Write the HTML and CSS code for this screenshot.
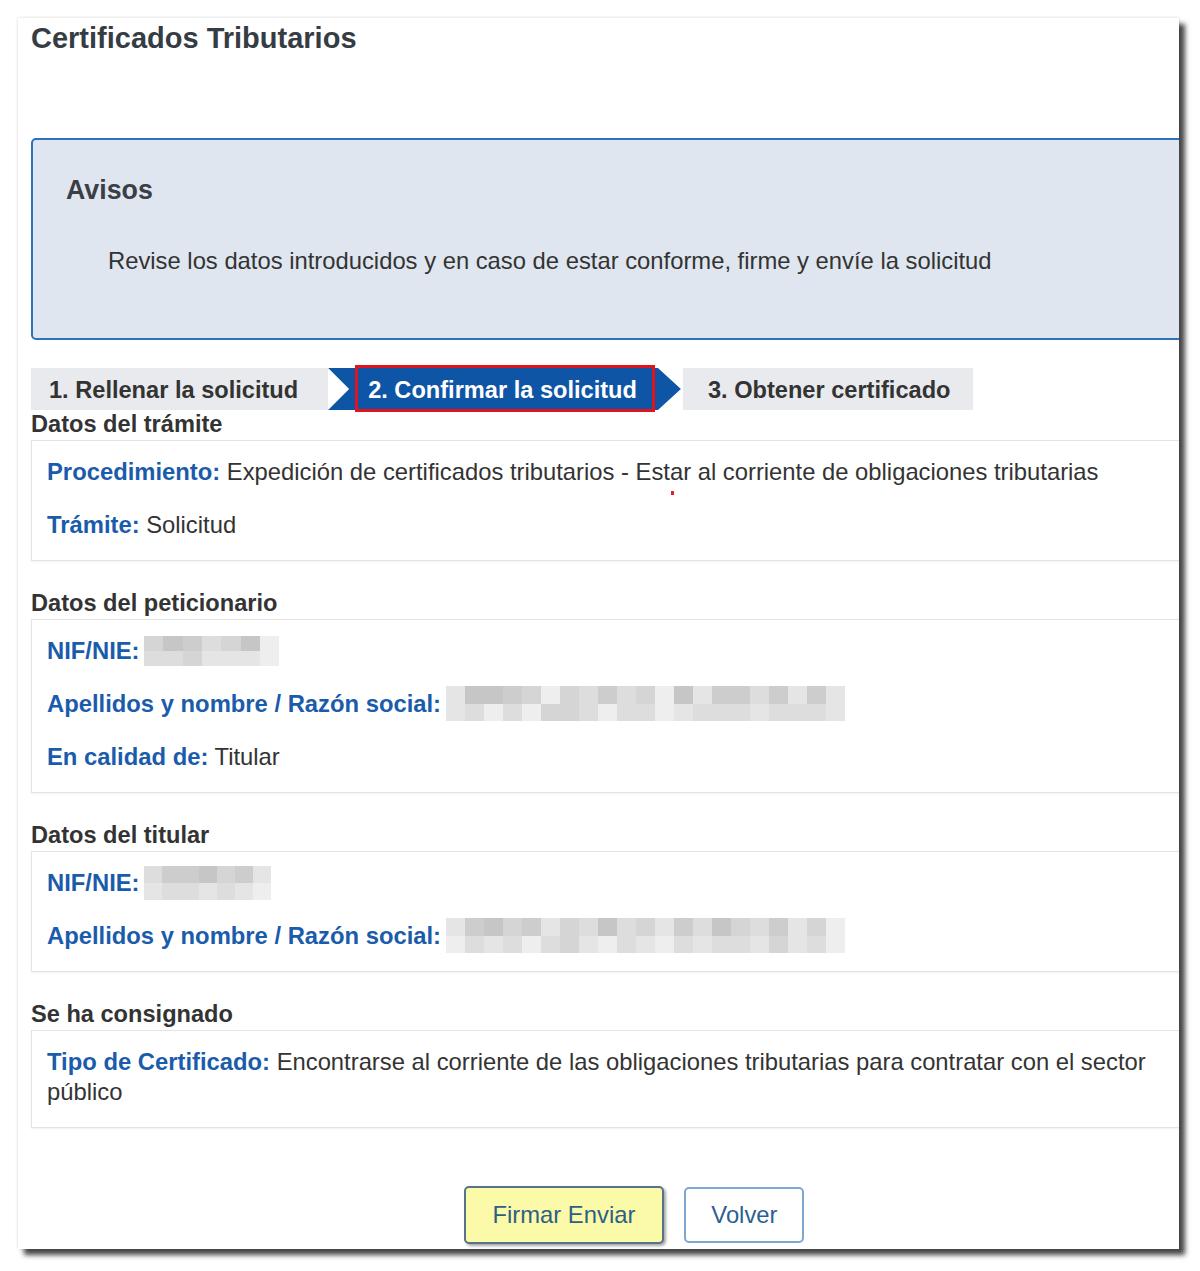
FILE: index.html
```html
<!DOCTYPE html>
<html lang="es">
<head>
<meta charset="utf-8">
<title>Certificados Tributarios</title>
<link rel="stylesheet" href="styles.css">
</head>
<body>
<div class="card">
  <div class="content">
    <h1 class="title">Certificados Tributarios</h1>

    <div class="avisos">
      <h2 class="avisos-title">Avisos</h2>
      <p class="avisos-text">Revise los datos introducidos y en caso de estar conforme, firme y envíe la solicitud</p>
    </div>

    <div class="steps">
      <div class="step step-done">1. Rellenar la solicitud</div>
      <div class="step step-active">2. Confirmar la solicitud</div>
      <div class="step step-next">3. Obtener certificado</div>
      <span class="highlight"></span>
    </div>

    <h3 class="section-title">Datos del trámite</h3>
    <div class="panel">
      <p class="row"><span class="label">Procedimiento:</span> Expedición de certificados tributarios - Estar al corriente de obligaciones tributarias</p>
      <p class="row"><span class="label">Trámite:</span> Solicitud</p>
      <span class="red-dot"></span>
    </div>

    <h3 class="section-title">Datos del peticionario</h3>
    <div class="panel">
      <p class="row"><span class="label">NIF/NIE:</span> <span class="pix pix-nif"><i class="c3"></i><i class="c1"></i><i class="c2"></i><i class="c4"></i><i class="c3"></i><i class="c1"></i><i class="c6"></i><i class="c4"></i><i class="c4"></i><i class="c3"></i><i class="c5"></i><i class="c5"></i><i class="c5"></i><i class="c6"></i></span></p>
      <p class="row"><span class="label">Apellidos y nombre / Razón social:</span> <span class="pix pix-name"><i class="c5"></i><i class="c1"></i><i class="c1"></i><i class="c2"></i><i class="c3"></i><i class="c6"></i><i class="c3"></i><i class="c4"></i><i class="c2"></i><i class="c4"></i><i class="c3"></i><i class="c6"></i><i class="c1"></i><i class="c5"></i><i class="c2"></i><i class="c2"></i><i class="c4"></i><i class="c2"></i><i class="c5"></i><i class="c2"></i><i class="c5"></i><i class="c5"></i><i class="c4"></i><i class="c6"></i><i class="c4"></i><i class="c6"></i><i class="c3"></i><i class="c3"></i><i class="c4"></i><i class="c6"></i><i class="c4"></i><i class="c4"></i><i class="c6"></i><i class="c5"></i><i class="c4"></i><i class="c4"></i><i class="c4"></i><i class="c5"></i><i class="c4"></i><i class="c4"></i><i class="c4"></i><i class="c5"></i></span></p>
      <p class="row"><span class="label">En calidad de:</span> Titular</p>
    </div>

    <h3 class="section-title">Datos del titular</h3>
    <div class="panel">
      <p class="row"><span class="label">NIF/NIE:</span> <span class="pix pix-nif2"><i class="c4"></i><i class="c2"></i><i class="c2"></i><i class="c1"></i><i class="c3"></i><i class="c2"></i><i class="c5"></i><i class="c5"></i><i class="c4"></i><i class="c4"></i><i class="c5"></i><i class="c4"></i><i class="c5"></i><i class="c6"></i></span></p>
      <p class="row"><span class="label">Apellidos y nombre / Razón social:</span> <span class="pix pix-name"><i class="c5"></i><i class="c2"></i><i class="c1"></i><i class="c3"></i><i class="c2"></i><i class="c5"></i><i class="c3"></i><i class="c4"></i><i class="c1"></i><i class="c4"></i><i class="c3"></i><i class="c5"></i><i class="c2"></i><i class="c4"></i><i class="c1"></i><i class="c3"></i><i class="c4"></i><i class="c2"></i><i class="c5"></i><i class="c3"></i><i class="c6"></i><i class="c6"></i><i class="c4"></i><i class="c5"></i><i class="c4"></i><i class="c6"></i><i class="c4"></i><i class="c3"></i><i class="c5"></i><i class="c6"></i><i class="c4"></i><i class="c5"></i><i class="c6"></i><i class="c4"></i><i class="c5"></i><i class="c4"></i><i class="c4"></i><i class="c5"></i><i class="c3"></i><i class="c5"></i><i class="c4"></i><i class="c6"></i></span></p>
    </div>

    <h3 class="section-title">Se ha consignado</h3>
    <div class="panel panel-last">
      <p class="row"><span class="label">Tipo de Certificado:</span> Encontrarse al corriente de las obligaciones tributarias para contratar con el sector público</p>
    </div>

    <div class="actions">
      <button class="btn btn-primary" type="button">Firmar Enviar</button>
      <button class="btn btn-secondary" type="button">Volver</button>
    </div>
  </div>
</div>
</body>
</html>
```

FILE: styles.css
```css
html, body {
  margin: 0;
  background: #ffffff;
}

body {
  font-family: "Liberation Sans", Arial, sans-serif;
  color: #333333;
  padding: 18px 0 22px 18px;
}

.card {
  width: 1161px;
  height: 1231px;
  background: #ffffff;
  overflow: hidden;
  box-shadow: 6px 6px 5px rgba(0, 0, 0, 0.72), 0 0 3px rgba(0, 0, 0, 0.16);
}

.content {
  width: 1206px;
  padding: 3px 0 0 13px;
}

.title {
  margin: 0;
  font-size: 29px;
  line-height: 34px;
  font-weight: bold;
  color: #363c44;
}

.avisos {
  margin-top: 83px;
  border: 2px solid #2f71bb;
  border-radius: 5px;
  background: #dfe6ef;
  padding: 34px 0 62px 33px;
}

.avisos-title {
  margin: 0;
  font-size: 26.8px;
  line-height: 32px;
  font-weight: bold;
  color: #3b3f45;
}

.avisos-text {
  margin: 40px 0 0 42px;
  font-size: 23.8px;
  line-height: 30px;
  color: #333333;
}

.steps {
  position: relative;
  display: flex;
  margin-top: 28px;
  height: 42px;
}

.step {
  display: flex;
  align-items: center;
  padding-top: 2px;
  box-sizing: border-box;
  font-size: 23.6px;
  font-weight: bold;
  white-space: nowrap;
}

.step-done,
.step-next {
  background: #e8eaed;
  color: #333333;
}

.step-done {
  padding-left: 18px;
  padding-right: 30px;
}

.step-active {
  background: #0e55a6;
  color: #ffffff;
  padding-left: 40px;
  padding-right: 44px;
  clip-path: polygon(0 0, calc(100% - 23px) 0, 100% 50%, calc(100% - 23px) 100%, 0 100%, 21px 50%);
}

.step-next {
  margin-left: 2px;
  padding-left: 25px;
  padding-right: 23px;
}

.highlight {
  position: absolute;
  left: 324px;
  top: -3px;
  width: 300px;
  height: 47px;
  border: 3px solid #e1131c;
  box-sizing: border-box;
}

.section-title {
  margin: 0;
  font-size: 23.6px;
  line-height: 28px;
  font-weight: bold;
  color: #333333;
}

.panel {
  position: relative;
  margin: 2px 0 28px;
  border: 1px solid #e4e4e4;
  padding: 16px 30px 20px 15px;
  box-shadow: 0 1px 2px rgba(0, 0, 0, 0.06);
}

.panel-last {
  margin-bottom: 58px;
}

.row {
  margin: 0 0 23px;
  font-size: 23.8px;
  line-height: 30px;
  color: #333333;
}

.row:last-of-type {
  margin-bottom: 0;
}

.label {
  color: #1a5cab;
  font-weight: bold;
}

.red-dot {
  position: absolute;
  left: 639px;
  top: 50px;
  width: 3px;
  height: 4px;
  background: #e0202a;
}

.pix {
  display: inline-grid;
  vertical-align: middle;
  margin: -12px 0 -12px -2px;
  position: relative;
  top: -2px;
}

.pix-nif {
  grid-template-columns: repeat(7, 19.3px);
  grid-template-rows: 15px 15px;
}

.pix-nif2 {
  grid-template-columns: repeat(7, 18.2px);
  grid-template-rows: 17px 17px;
}

.pix-name {
  grid-template-columns: repeat(21, 19px);
  grid-template-rows: 17.5px 17.5px;
}

.pix i {
  display: block;
}

.c1 { background: #c6c6c6; }
.c2 { background: #cdcdcd; }
.c3 { background: #d5d5d5; }
.c4 { background: #dddddd; }
.c5 { background: #e5e5e5; }
.c6 { background: #eeeeee; }

.actions {
  display: flex;
  justify-content: center;
  align-items: center;
  gap: 20px;
}

.btn {
  font-family: "Liberation Sans", Arial, sans-serif;
  font-size: 23.8px;
  border-radius: 5px;
  box-sizing: border-box;
  margin: 0;
}

.btn-primary {
  height: 58px;
  padding: 0 27px;
  background: #fbfaa9;
  border: 2px solid #557487;
  color: #2d6184;
  box-shadow: 2px 2px 3px rgba(0, 0, 0, 0.35);
}

.btn-secondary {
  height: 56px;
  padding: 0 25px;
  background: #ffffff;
  border: 2px solid #7ea7d4;
  color: #2d5f90;
}
```
